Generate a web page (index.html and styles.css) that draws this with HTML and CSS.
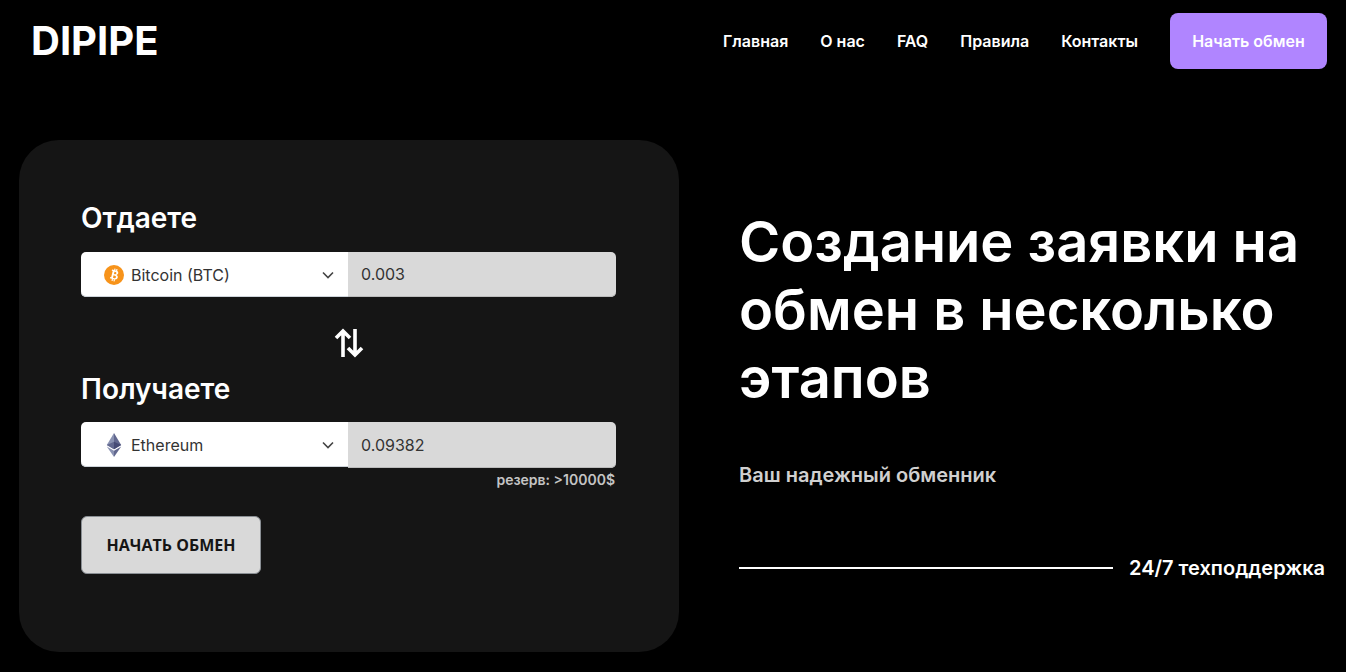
FILE: index.html
```html
<!DOCTYPE html>
<html>
<head>
    <meta charset="utf-8">
    <meta name="viewport" content="width=device-width">
    <title>DIPIPE</title>
    <link rel="stylesheet" href="styles.css">
</head>
<body>
    <header class="header">
        <a href="#" class="logo">DIPIPE</a>
        <nav class="nav">
            <a href="#">Главная</a>
            <a href="#">О нас</a>
            <a href="#">FAQ</a>
            <a href="#">Правила</a>
            <a href="#">Контакты</a>
            <a href="#" class="nav-btn">Начать обмен</a>
        </nav>
    </header>

    <main class="main">
        <form class="card">
            <h3 class="card-title">Отдаете</h3>
            <div class="field">
                <div class="select">
                    <svg class="coin" width="20" height="20" viewBox="0 0 20 20">
                        <circle cx="10" cy="10" r="10" fill="#f7931a"/>
                        <g transform="rotate(14 10 10)">
                            <path d="M6.800 5.200h4.200c1.700 0 2.700.9 2.700 2.200 0 .9-.5 1.600-1.300 1.900 1.200.3 1.900 1.100 1.900 2.300 0 1.600-1.200 2.600-3 2.600H6.800v-1.300h1V6.500h-1zM9.700 6.700v2.300h1c.8 0 1.200-.4 1.200-1.150s-.4-1.150-1.200-1.150zm0 3.700v2.600h1.300c.9 0 1.400-.5 1.400-1.300s-.5-1.300-1.400-1.300zM8.900 3.600h1.200v1.800H8.900zm2 0h1.200v1.800h-1.200zM8.900 14.400h1.200v1.800H8.900zm2 0h1.200v1.800h-1.200z" fill="#fff"/>
                        </g>
                    </svg>
                    <span class="coin-name">Bitcoin (BTC)</span>
                    <svg class="chevron" width="12" height="8" viewBox="0 0 12 8"><path d="M1 1.500l5 5 5-5" fill="none" stroke="#444" stroke-width="1.600"/></svg>
                </div>
                <input class="amount" type="text" value="0.003">
            </div>

            <div class="swap">
                <svg width="30" height="30" viewBox="0 0 30 30" fill="none" stroke="#fff" stroke-width="3.600">
                    <path d="M9 29V3M2 10l7-7 7 7"/>
                    <path d="M21 1v26M14 20l7 7 7-7"/>
                </svg>
            </div>

            <h3 class="card-title">Получаете</h3>
            <div class="field field-to">
                <div class="select">
                    <svg class="coin" width="20" height="24" viewBox="0 0 20 24">
                        <path d="M10 0L2.800 12 10 16.200z" fill="#8a92b2"/>
                        <path d="M10 0l7.200 12L10 16.200z" fill="#62688f"/>
                        <path d="M2.800 12L10 8.800v7.400z" fill="#62688f"/>
                        <path d="M17.200 12L10 8.800v7.400z" fill="#454a75"/>
                        <path d="M2.800 13.400L10 24v-6.200z" fill="#8a92b2"/>
                        <path d="M17.200 13.400L10 24v-6.200z" fill="#62688f"/>
                    </svg>
                    <span class="coin-name">Ethereum</span>
                    <svg class="chevron" width="12" height="8" viewBox="0 0 12 8"><path d="M1 1.500l5 5 5-5" fill="none" stroke="#444" stroke-width="1.600"/></svg>
                </div>
                <input class="amount amount-to" type="text" value="0.09382">
            </div>
            <div class="reserve">резерв: &gt;10000$</div>
            <button class="submit" type="button">НАЧАТЬ ОБМЕН</button>
        </form>

        <section class="info">
            <h1 class="info-title">Создание заявки на обмен в несколько этапов</h1>
            <p class="info-sub">Ваш надежный обменник</p>
            <div class="support">
                <span class="support-line"></span>
                <span class="support-text">24/7 техподдержка</span>
            </div>
        </section>
    </main>
</body>
</html>
```

FILE: styles.css
```css
* {
    box-sizing: border-box;
}
html, body {
    height: 100%;
}
body {
    margin: 0;
    background-color: #000;
    color: #fff;
    font-family: Inter, "Noto Sans", sans-serif;
    overflow: hidden;
}
a {
    color: inherit;
    text-decoration: none;
}
.header {
    display: flex;
    justify-content: space-between;
    align-items: center;
    padding: 13px 19px 0 31px;
}
.logo {
    font-size: 40px;
    font-weight: 700;
    line-height: 56px;
}
.nav {
    display: flex;
    align-items: center;
    gap: 32px;
    font-size: 16px;
    font-weight: 600;
}
.nav-btn {
    display: block;
    width: 157px;
    height: 56px;
    line-height: 56px;
    text-align: center;
    background-color: #b085ff;
    border-radius: 8px;
}
.main {
    display: flex;
    margin-top: 71px;
    padding-left: 19px;
}
.card {
    width: 660px;
    height: 512px;
    padding: 62px 63px 0 62px;
    background-color: #151515;
    border-radius: 40px;
}
.card-title {
    margin: 0;
    font-size: 28px;
    font-weight: 600;
    line-height: 32px;
}
.field {
    display: flex;
    height: 45px;
    margin-top: 18px;
}
.field-to {
    margin-top: 17px;
}
.select {
    display: flex;
    align-items: center;
    width: 267px;
    height: 45px;
    padding-left: 23px;
    background-color: #fff;
    border-radius: 5px 0 0 5px;
    box-shadow: inset 0 -1px 0 #ced4da;
}
.coin {
    flex: none;
}
.coin-name {
    margin-left: 7px;
    font-size: 16px;
    color: #333;
}
.chevron {
    margin-left: auto;
    margin-right: 14px;
}
.amount {
    width: 268px;
    height: 45px;
    padding: 0 13px 2px;
    border: 0;
    box-shadow: inset 0 -1px 0 #bbb;
    border-radius: 0 5px 5px 0;
    background-color: #d9d9d9;
    color: #333;
    font-family: Inter, sans-serif;
    font-size: 16px;
}
.amount-to {
    height: 46px;
    padding-bottom: 1px;
}
.swap {
    display: flex;
    justify-content: center;
    height: 30px;
    margin-top: 31px;
    margin-bottom: 15px;
    padding-left: 1px;
}
.reserve {
    margin-top: 3px;
    padding-right: 1px;
    padding-top: 1px;
    text-align: right;
    font-size: 14px;
    font-weight: 600;
    line-height: 18px;
    color: #c4c4c4;
}
.submit {
    display: block;
    width: 180px;
    height: 58px;
    margin-top: 27px;
    background-color: #d9d9d9;
    border: 1px solid #8a8f94;
    border-radius: 6px;
    color: #151515;
    font-family: "Open Sans", sans-serif;
    font-size: 16px;
    font-weight: 700;
}
.info {
    margin-left: 60px;
    padding-top: 68px;
    width: 600px;
}
.info-title {
    margin: 0;
    font-size: 56px;
    font-weight: 600;
    line-height: 68px;
}
.info-sub {
    margin: 51px 0 0;
    font-size: 20px;
    font-weight: 600;
    line-height: 24px;
    color: #d0d0d0;
}
.support {
    display: flex;
    align-items: center;
    gap: 16px;
    margin-top: 69px;
}
.support-line {
    width: 374px;
    height: 2px;
    background-color: #fff;
}
.support-text {
    font-size: 20px;
    font-weight: 600;
    white-space: nowrap;
}
```
